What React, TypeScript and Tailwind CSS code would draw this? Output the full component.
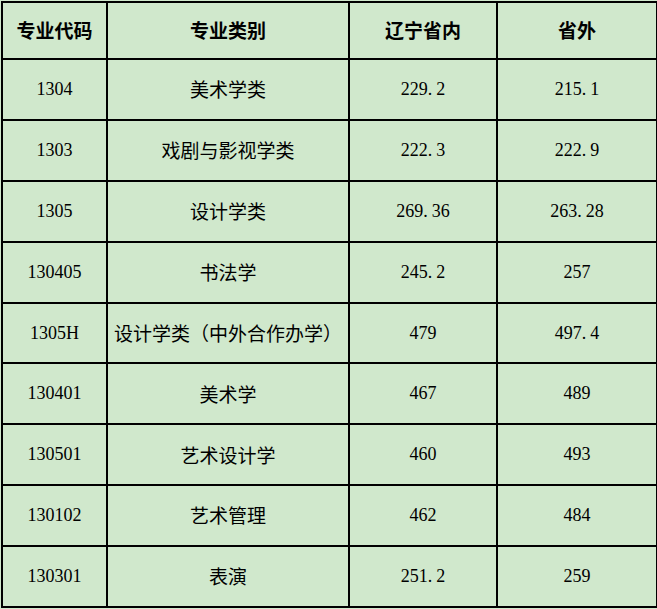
const rows = [
  ["1304", "美术学类", "229.2", "215.1"],
  ["1303", "戏剧与影视学类", "222.3", "222.9"],
  ["1305", "设计学类", "269.36", "263.28"],
  ["130405", "书法学", "245.2", "257"],
  ["1305H", "设计学类（中外合作办学）", "479", "497.4"],
  ["130401", "美术学", "467", "489"],
  ["130501", "艺术设计学", "460", "493"],
  ["130102", "艺术管理", "462", "484"],
  ["130301", "表演", "251.2", "259"],
]

const cell = "border-2 border-black text-center align-middle p-0"
const cjk = { fontFamily: '"Noto Sans CJK SC", sans-serif' }

// SimSun-style wide dot
function Num({ v }: { v: string }) {
  const [a, b] = v.split(".")
  if (b === undefined) return <>{v}</>
  return (
    <>
      {a}
      <span className="mr-[4px]">.</span>
      {b}
    </>
  )
}

export default function App() {
  return (
    <div className="w-[657px] h-[609px] bg-[#d0e8cc] pt-px pl-px">
      <table
        className="table-fixed border-collapse w-[655px] text-[18px] text-black"
        style={{ fontFamily: '"Liberation Serif", "Noto Sans CJK SC", serif' }}
      >
        <colgroup>
          <col className="w-[105px]" />
          <col className="w-[242px]" />
          <col className="w-[148px]" />
          <col className="w-[160px]" />
        </colgroup>
        <thead>
          <tr className="h-[57px] font-bold text-[19px]" style={cjk}>
            <th className={cell}>专业代码</th>
            <th className={cell}>专业类别</th>
            <th className={cell}>辽宁省内</th>
            <th className={cell}>省外</th>
          </tr>
        </thead>
        <tbody>
          {rows.map((r) => (
            <tr key={r[0]} className="h-[60.9px]">
              <td className={cell}>{r[0]}</td>
              <td className={cell + " text-[19px]"} style={cjk}>
                {r[1]}
              </td>
              <td className={cell}>
                <Num v={r[2]} />
              </td>
              <td className={cell}>
                <Num v={r[3]} />
              </td>
            </tr>
          ))}
        </tbody>
      </table>
    </div>
  )
}
